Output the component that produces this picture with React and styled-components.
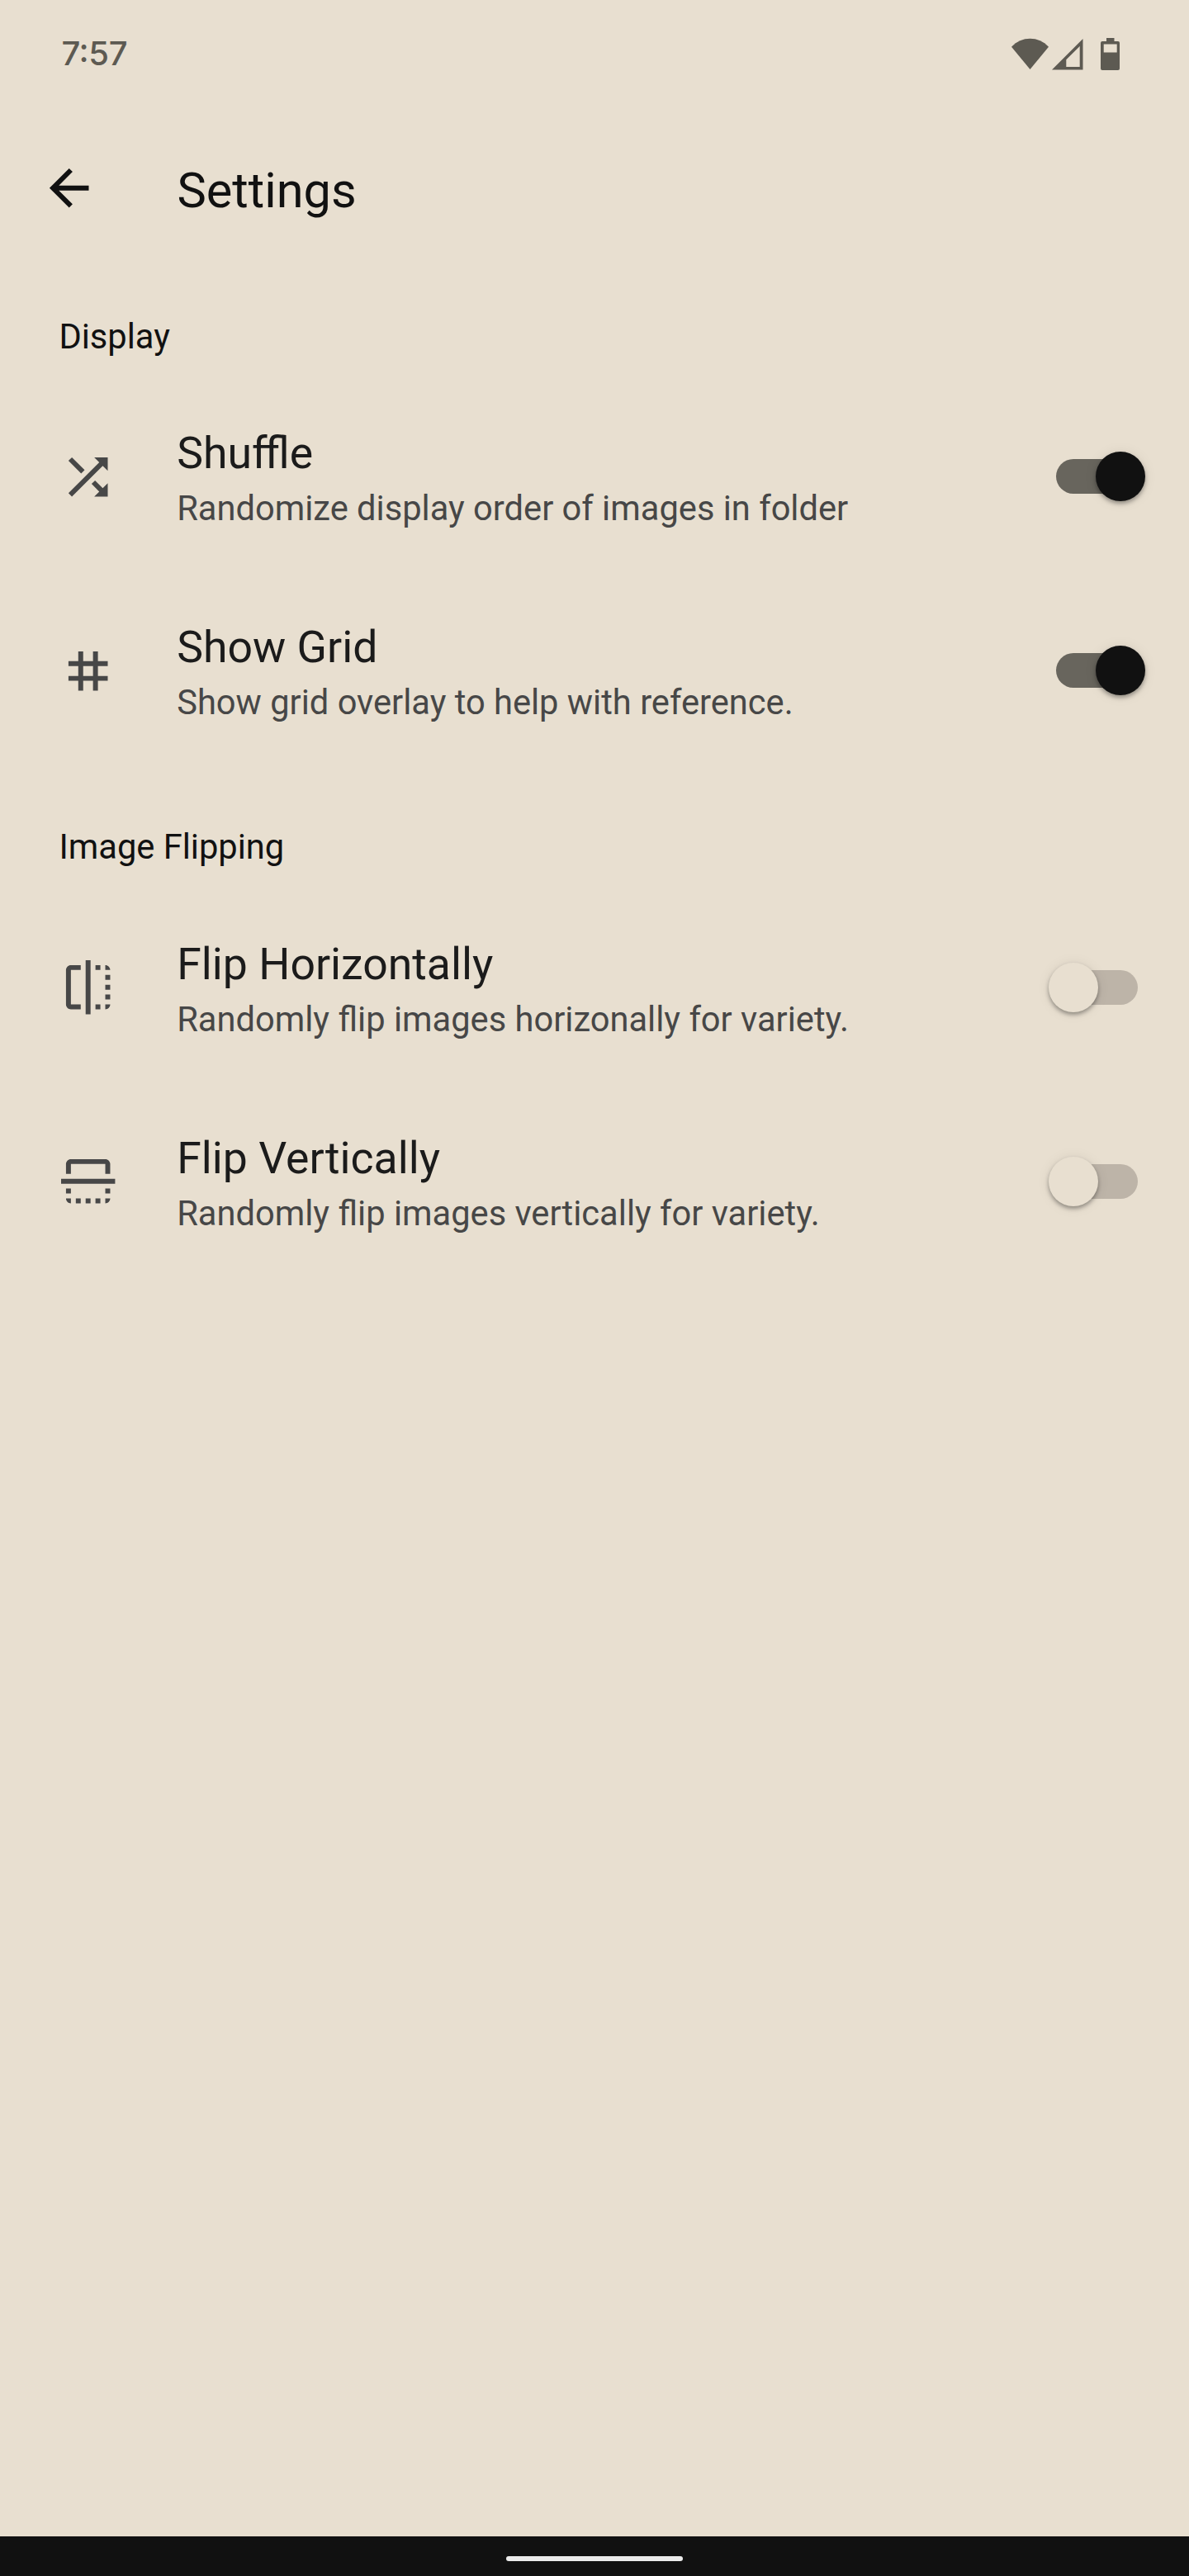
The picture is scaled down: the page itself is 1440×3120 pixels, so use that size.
import React, { useState } from "react";
import styled, { createGlobalStyle } from "styled-components";

const GlobalStyle = createGlobalStyle`
  * { box-sizing: border-box; }
  html, body { margin: 0; padding: 0; background: #e8dfd0; }
  body { font-family: Roboto, "Noto Sans", sans-serif; }
`;

const Screen = styled.div`
  display: flex;
  flex-direction: column;
  width: 1440px;
  height: 3120px;
  background: #e8dfd0;
  color: #111;
`;

const StatusBar = styled.div`
  display: flex;
  justify-content: space-between;
  height: 144px;
  padding: 41px 83px 0 74.5px;
  color: #5d5a52;
`;

const Clock = styled.div`
  font-family: Inter, Roboto, sans-serif;
  font-weight: 500;
  font-size: 40px;
  line-height: 48px;
  letter-spacing: -0.4px;
  font-feature-settings: "calt" 1, "case" 1;
`;

const StatusIcons = styled.svg`
  display: block;
  width: 132px;
  height: 40px;
  margin-top: 5px;
  fill: currentColor;
`;

const AppBar = styled.header`
  display: flex;
  align-items: center;
  height: 167px;
  padding-left: 48px;
  gap: 95px;
`;

const BackButton = styled.button`
  display: flex;
  padding: 1px 0 0;
  border: 0;
  background: none;
  color: #111;
`;

const Glyph = styled.svg`
  display: block;
  width: 71.4px;
  height: 71.4px;
  fill: currentColor;
  transform: ${(p) => (p.$quarterTurn ? "rotate(90deg)" : "none")};
`;

const Title = styled.h1`
  margin: 0;
  padding-top: 7px;
  font-size: 59.5px;
  font-weight: 400;
  line-height: 70px;
`;

const Content = styled.main`
  flex: 1;
`;

const CategoryTitle = styled.h2`
  margin: 0;
  height: 148.75px;
  padding: 71.6px 0 0 71.4px;
  font-size: 41.65px;
  font-weight: 400;
  line-height: 50px;
`;

const Row = styled.div`
  display: flex;
  align-items: center;
  height: 235px;
  padding: 0 53px 0 71.4px;
`;

const RowIcon = styled.div`
  width: 142.8px;
  color: #474747;
`;

const RowText = styled.div`
  display: flex;
  flex: 1;
  flex-direction: column;
  gap: 10px;
  padding-top: 3.1px;
`;

const RowTitle = styled.div`
  font-size: 53.55px;
  line-height: 64px;
  color: #1b1b1b;
`;

const RowSummary = styled.div`
  font-size: 41.65px;
  line-height: 50px;
  color: #474747;
`;

const Track = styled.button`
  display: flex;
  align-items: center;
  justify-content: ${(p) => (p.$on ? "flex-end" : "flex-start")};
  width: 99px;
  height: 42px;
  margin: 0 9px;
  padding: 0;
  border: 0;
  border-radius: 21px;
  background: ${(p) => (p.$on ? "#68655d" : "#bdb4a8")};
`;

const Thumb = styled.span`
  flex: none;
  width: 60px;
  height: 60px;
  margin: 0 -9px;
  border-radius: 50%;
  background: ${(p) => (p.$on ? "#111" : "#e8dfd0")};
  box-shadow: 0 3px 5px rgba(0, 0, 0, 0.34), 0 1px 16px rgba(0, 0, 0, 0.08);
`;

const NavBar = styled.div`
  display: flex;
  align-items: center;
  justify-content: center;
  height: 48px;
  padding-top: 6px;
  background: #111;
`;

const NavHandle = styled.div`
  width: 214px;
  height: 6px;
  border-radius: 3px;
  background: #ebebeb;
`;

const paths = {
  back: "M20 11H7.83l5.59-5.59L12 4l-8 8 8 8 1.41-1.41L7.83 13H20v-2z",
  shuffle:
    "M10.59 9.17L5.41 4 4 5.41l5.17 5.17 1.42-1.41zM14.5 4l2.04 2.04L4 18.59 5.41 20 17.96 7.46 20 9.5V4h-5.5zm.33 9.41l-1.41 1.41 3.13 3.13L14.5 20H20v-5.5l-2.04 2.04-3.13-3.13z",
  grid: "M20 10V8h-4V4h-2v4h-4V4H8v4H4v2h4v4H4v2h4v4h2v-4h4v4h2v-4h4v-2h-4v-4h4zm-6 4h-4v-4h4v4z",
  flip: "M15 21h2v-2h-2v2zm4-12h2V7h-2v2zM3 5v14c0 1.1.9 2 2 2h4v-2H5V5h4V3H5c-1.1 0-2 .9-2 2zm16-2v2h2c0-1.1-.9-2-2-2zm-8 20h2V1h-2v22zm8-6h2v-2h-2v2zM15 5h2V3h-2v2zm4 8h2v-2h-2v2zm0 8c1.1 0 2-.9 2-2h-2v2z",
};

const categories = [
  {
    title: "Display",
    items: [
      { icon: "shuffle", title: "Shuffle", summary: "Randomize display order of images in folder", on: true },
      { icon: "grid", title: "Show Grid", summary: "Show grid overlay to help with reference.", on: true },
    ],
  },
  {
    title: "Image Flipping",
    items: [
      { icon: "flip", title: "Flip Horizontally", summary: "Randomly flip images horizonally for variety.", on: false },
      { icon: "flip", turn: true, title: "Flip Vertically", summary: "Randomly flip images vertically for variety.", on: false },
    ],
  },
];

function Icon({ name, turn }) {
  return (
    <Glyph viewBox="0 0 24 24" $quarterTurn={turn} aria-hidden="true">
      <path d={paths[name]} />
    </Glyph>
  );
}

function Preference({ item }) {
  const [on, setOn] = useState(item.on);
  return (
    <Row>
      <RowIcon>
        <Icon name={item.icon} turn={item.turn} />
      </RowIcon>
      <RowText>
        <RowTitle>{item.title}</RowTitle>
        <RowSummary>{item.summary}</RowSummary>
      </RowText>
      <Track $on={on} role="switch" aria-checked={on} aria-label={item.title} onClick={() => setOn(!on)}>
        <Thumb $on={on} />
      </Track>
    </Row>
  );
}

export default function App() {
  return (
    <>
      <GlobalStyle />
      <Screen>
        <StatusBar>
          <Clock>7:57</Clock>
          <StatusIcons viewBox="0 0 132 40" aria-hidden="true">
            <path d="M0 10.7C6.3 4 14 .7 22.5.7S38.7 4 45 10.7L22.5 38z" />
            <path fillRule="evenodd" d="M49 38.5L86.5 1V38.5zM66.3 35H82.7V10L66.3 26.2z" />
            <path
              fillRule="evenodd"
              d="M115 0h9.500v4H129a2 2 0 0 1 2 2v31a2 2 0 0 1-2 2h-19a2 2 0 0 1-2-2V6a2 2 0 0 1 2-2h5zM111.700 7.500v10h16v-10z"
            />
          </StatusIcons>
        </StatusBar>
        <AppBar>
          <BackButton aria-label="Back">
            <Icon name="back" />
          </BackButton>
          <Title>Settings</Title>
        </AppBar>
        <Content>
          {categories.map((category) => (
            <section key={category.title}>
              <CategoryTitle>{category.title}</CategoryTitle>
              {category.items.map((item) => (
                <Preference key={item.title} item={item} />
              ))}
            </section>
          ))}
        </Content>
        <NavBar>
          <NavHandle />
        </NavBar>
      </Screen>
    </>
  );
}
